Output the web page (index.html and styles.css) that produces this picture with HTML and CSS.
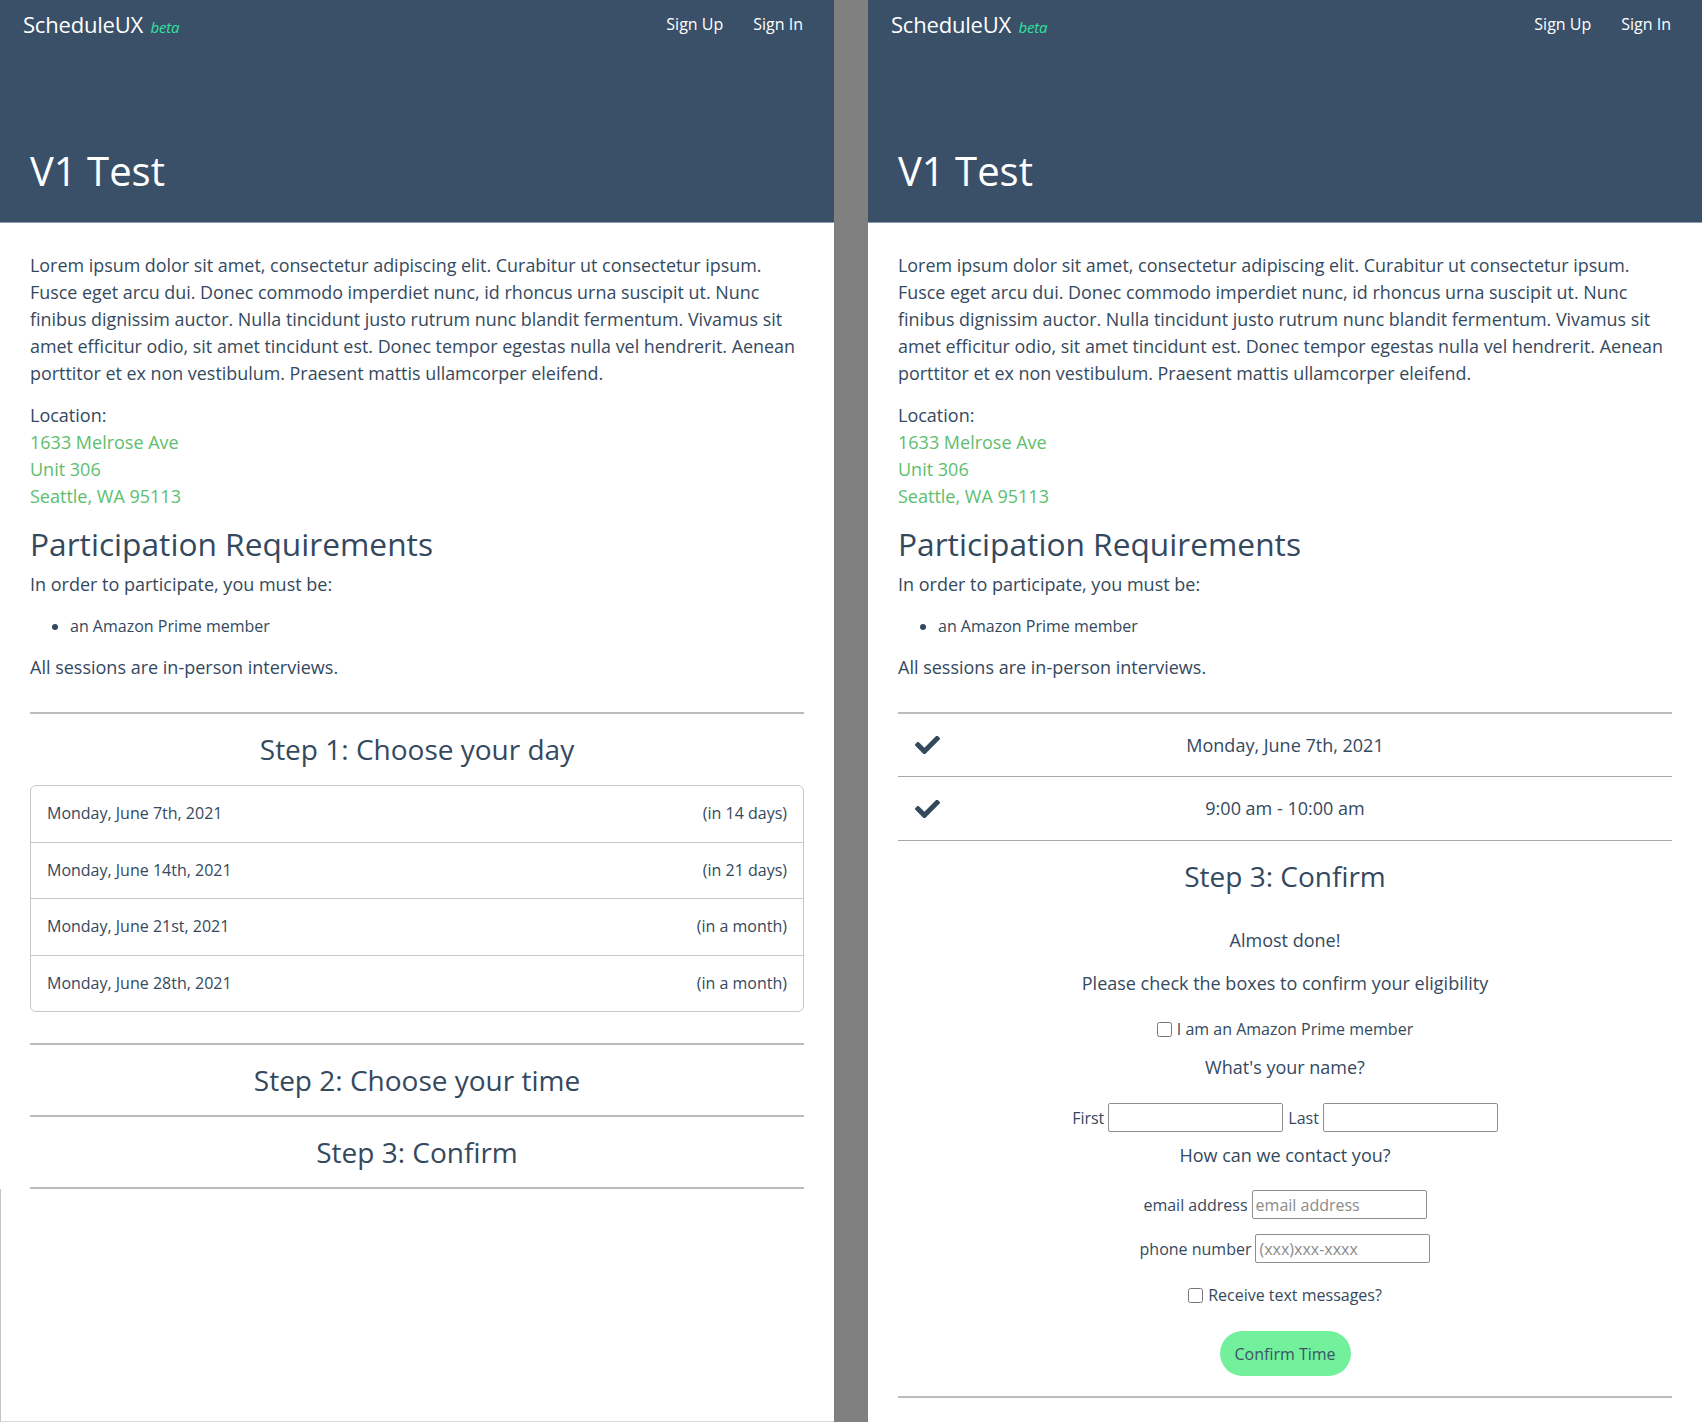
FILE: index.html
```html
<!DOCTYPE html>
<html lang="en">
<head>
<meta charset="utf-8">
<title>ScheduleUX - V1 Test</title>
<link rel="stylesheet" href="styles.css">
</head>
<body>
<div class="screens">
  <!-- LEFT SCREEN -->
  <section class="screen">
    <header class="hero">
      <nav class="nav">
        <div class="brand">ScheduleUX <em class="beta">beta</em></div>
        <div class="nav-links"><a href="#">Sign Up</a><a href="#">Sign In</a></div>
      </nav>
      <h1 class="title">V1 Test</h1>
    </header>
    <main class="content">
      <p class="intro">Lorem ipsum dolor sit amet, consectetur adipiscing elit. Curabitur ut consectetur ipsum. Fusce eget arcu dui. Donec commodo imperdiet nunc, id rhoncus urna suscipit ut. Nunc finibus dignissim auctor. Nulla tincidunt justo rutrum nunc blandit fermentum. Vivamus sit amet efficitur odio, sit amet tincidunt est. Donec tempor egestas nulla vel hendrerit. Aenean porttitor et ex non vestibulum. Praesent mattis ullamcorper eleifend.</p>
      <p class="location">Location:<br><span class="addr">1633 Melrose Ave<br>Unit 306<br>Seattle, WA 95113</span></p>
      <h2 class="req-title">Participation Requirements</h2>
      <p class="req-lead">In order to participate, you must be:</p>
      <ul class="req-list"><li>an Amazon Prime member</li></ul>
      <p class="req-note">All sessions are in-person interviews.</p>

      <div class="step step-first">
        <h3 class="step-title">Step 1: Choose your day</h3>
        <div class="day-list">
          <div class="day-row"><span>Monday, June 7th, 2021</span><span>(in 14 days)</span></div>
          <div class="day-row"><span>Monday, June 14th, 2021</span><span>(in 21 days)</span></div>
          <div class="day-row"><span>Monday, June 21st, 2021</span><span>(in a month)</span></div>
          <div class="day-row"><span>Monday, June 28th, 2021</span><span>(in a month)</span></div>
        </div>
      </div>
      <div class="step step-spaced">
        <h3 class="step-title">Step 2: Choose your time</h3>
      </div>
      <div class="step">
        <h3 class="step-title">Step 3: Confirm</h3>
      </div>
      <div class="rule"></div>
    </main>
    <div class="filler"></div>
  </section>

  <!-- RIGHT SCREEN -->
  <section class="screen">
    <header class="hero">
      <nav class="nav">
        <div class="brand">ScheduleUX <em class="beta">beta</em></div>
        <div class="nav-links"><a href="#">Sign Up</a><a href="#">Sign In</a></div>
      </nav>
      <h1 class="title">V1 Test</h1>
    </header>
    <main class="content">
      <p class="intro">Lorem ipsum dolor sit amet, consectetur adipiscing elit. Curabitur ut consectetur ipsum. Fusce eget arcu dui. Donec commodo imperdiet nunc, id rhoncus urna suscipit ut. Nunc finibus dignissim auctor. Nulla tincidunt justo rutrum nunc blandit fermentum. Vivamus sit amet efficitur odio, sit amet tincidunt est. Donec tempor egestas nulla vel hendrerit. Aenean porttitor et ex non vestibulum. Praesent mattis ullamcorper eleifend.</p>
      <p class="location">Location:<br><span class="addr">1633 Melrose Ave<br>Unit 306<br>Seattle, WA 95113</span></p>
      <h2 class="req-title">Participation Requirements</h2>
      <p class="req-lead">In order to participate, you must be:</p>
      <ul class="req-list"><li>an Amazon Prime member</li></ul>
      <p class="req-note">All sessions are in-person interviews.</p>

      <div class="done-row done-first">
        <svg class="check" viewBox="0 72 512 368" aria-hidden="true"><path d="M173.898 439.404l-166.4-166.4c-9.997-9.997-9.997-26.206 0-36.204l36.203-36.204c9.997-9.998 26.207-9.998 36.204 0L192 312.69 432.095 72.596c9.997-9.997 26.207-9.997 36.204 0l36.203 36.204c9.997 9.997 9.997 26.206 0 36.204l-294.4 294.401c-9.998 9.997-26.207 9.997-36.204-.001z"/></svg>
        <span class="done-text">Monday, June 7th, 2021</span>
        <span></span>
      </div>
      <div class="done-row">
        <svg class="check" viewBox="0 72 512 368" aria-hidden="true"><path d="M173.898 439.404l-166.4-166.4c-9.997-9.997-9.997-26.206 0-36.204l36.203-36.204c9.997-9.998 26.207-9.998 36.204 0L192 312.69 432.095 72.596c9.997-9.997 26.207-9.997 36.204 0l36.203 36.204c9.997 9.997 9.997 26.206 0 36.204l-294.4 294.401c-9.998 9.997-26.207 9.997-36.204-.001z"/></svg>
        <span class="done-text">9:00 am - 10:00 am</span>
        <span></span>
      </div>
      <div class="confirm">
        <h3 class="step-title">Step 3: Confirm</h3>
        <form class="confirm-form">
          <p class="f-almost">Almost done!</p>
          <p class="f-please">Please check the boxes to confirm your eligibility</p>
          <label class="f-check f-check-first"><input type="checkbox"> I am an Amazon Prime member</label>
          <p class="f-q f-q-name">What's your name?</p>
          <div class="f-row f-row-name">
            <label class="f-label">First</label><input class="f-input" type="text">
            <label class="f-label">Last</label><input class="f-input" type="text">
          </div>
          <p class="f-q f-q-contact">How can we contact you?</p>
          <div class="f-row f-row-email">
            <label class="f-label">email address</label><input class="f-input" type="email" placeholder="email address">
          </div>
          <div class="f-row f-row-phone">
            <label class="f-label">phone number</label><input class="f-input" type="tel" placeholder="(xxx)xxx-xxxx">
          </div>
          <label class="f-check f-check-sms"><input type="checkbox"> Receive text messages?</label>
          <button class="f-btn" type="button">Confirm Time</button>
        </form>
      </div>
      <div class="rule rule-end"></div>
    </main>
  </section>
</div>
</body>
</html>
```

FILE: styles.css
```css
* { box-sizing: border-box; }

html, body {
  margin: 0;
  padding: 0;
}

body {
  background: #808080;
  font-family: "Open Sans", "Noto Sans", sans-serif;
  color: #34495e;
}

.screens {
  display: flex;
  gap: 34px;
  height: 1422px;
  overflow: hidden;
}

.screen {
  width: 834px;
  height: 1422px;
  background: #fff;
  display: flex;
  flex-direction: column;
  overflow: hidden;
}

/* Header */
.hero {
  height: 223px;
  flex: none;
  background: #3a5068;
  border-bottom: 1px solid #8a9bb0;
  display: flex;
  flex-direction: column;
  justify-content: space-between;
  padding-bottom: 27px;
}

.nav {
  height: 48px;
  display: flex;
  align-items: center;
  justify-content: space-between;
  padding: 0 31px 1px 23px;
}

.brand {
  color: #fff;
  font-size: 22px;
  letter-spacing: -0.2px;
}

.beta {
  color: #2ee39c;
  font-size: 15px;
  margin-left: 2px;
}

.nav-links {
  display: flex;
  gap: 30px;
}

.nav-links a {
  color: #fff;
  text-decoration: none;
  font-size: 16px;
}

.title {
  margin: 0;
  padding-left: 30px;
  color: #fff;
  font-weight: 400;
  font-size: 40px;
  line-height: 48px;
}

/* Content */
.content {
  padding: 29px 30px 0;
}

.intro {
  margin: 0;
  font-size: 17.9px;
  line-height: 27px;
}

.location {
  margin: 15px 0 0;
  font-size: 18px;
  line-height: 27px;
}

.addr {
  color: #5dbe6e;
}

.req-title {
  margin: 14px 0 0;
  font-weight: 400;
  font-size: 31.7px;
  line-height: 40px;
}

.req-lead {
  margin: 7px 0 0;
  font-size: 18px;
  line-height: 27px;
}

.req-list {
  margin: 17px 0 0;
  padding-left: 40px;
  font-size: 16px;
  line-height: 22px;
}

.req-note {
  margin: 17px 0 0;
  font-size: 18px;
  line-height: 27px;
}

/* Steps */
.step {
  border-top: 2px solid #bcbcbc;
}

.step-first {
  margin-top: 31px;
}

.step-spaced {
  margin-top: 31px;
}

.step-title {
  margin: 0;
  padding: 15px 0;
  text-align: center;
  font-weight: 400;
  font-size: 28px;
  line-height: 40px;
}

.step-first .step-title {
  padding-bottom: 16px;
}

.day-list {
  border: 1px solid #c8c8c8;
  border-radius: 6px;
  overflow: hidden;
}

.day-row {
  display: flex;
  justify-content: space-between;
  padding: 16px;
  font-size: 16px;
  line-height: 23.5px;
}

.day-row + .day-row {
  border-top: 1px solid #c8c8c8;
}

.rule {
  border-top: 2px solid #bcbcbc;
}

.filler {
  flex: 1;
  border-left: 1px solid #c4c4c4;
  border-bottom: 1px solid #d8d8d8;
}

/* Right screen: completed steps */
.done-row {
  display: grid;
  grid-template-columns: 1fr auto 1fr;
  align-items: center;
  height: 64px;
  padding: 0 17px;
  border-bottom: 1.5px solid #a8a8a8;
}

.done-first {
  margin-top: 31px;
  border-top: 2px solid #bcbcbc;
  height: 65px;
}

.check {
  width: 25px;
  height: 18px;
  fill: #34495e;
  justify-self: start;
}

.done-text {
  font-size: 18px;
  line-height: 27px;
  text-align: center;
}

.confirm .step-title {
  padding-bottom: 0;
}

.confirm-form {
  display: flex;
  flex-direction: column;
  align-items: center;
  text-align: center;
}

.confirm-form p {
  margin: 0;
  font-size: 18px;
  line-height: 27px;
}

.confirm-form .f-almost { margin-top: 31px; }
.confirm-form .f-please { margin-top: 16px; }

.f-check {
  display: flex;
  align-items: center;
  gap: 5px;
  font-size: 16px;
  line-height: 22px;
}

.f-check input {
  margin: 0;
  width: 15px;
  height: 15px;
}

.f-check-first { margin-top: 21px; }
.f-check-sms { margin-top: 21px; }

.confirm-form .f-q-name { margin-top: 14px; }
.confirm-form .f-q-contact { margin-top: 10px; }

.f-row {
  display: flex;
  align-items: center;
  gap: 4px;
}

.f-row-name { margin-top: 22px; }
.f-row-name .f-input + .f-label { margin-left: 1px; }
.f-row-email { margin-top: 21px; }
.f-row-phone { margin-top: 15px; }

.f-label {
  font-size: 16px;
  line-height: 22px;
}

.f-input {
  width: 175px;
  height: 29px;
  margin: 0;
  padding: 1px 3px;
  border: 1px solid #8f8f8f;
  border-radius: 2px;
  font-family: "Open Sans", "Noto Sans", sans-serif;
  font-size: 16px;
  color: #34495e;
  background: #fff;
}

.f-input::placeholder {
  color: #8a8a8a;
}

.f-btn {
  margin-top: 25px;
  width: 131px;
  height: 45px;
  border: none;
  border-radius: 23px;
  background: #72f09b;
  color: #3d5369;
  font-family: "Open Sans", "Noto Sans", sans-serif;
  font-size: 16px;
}

.rule-end {
  margin-top: 20px;
}
```
